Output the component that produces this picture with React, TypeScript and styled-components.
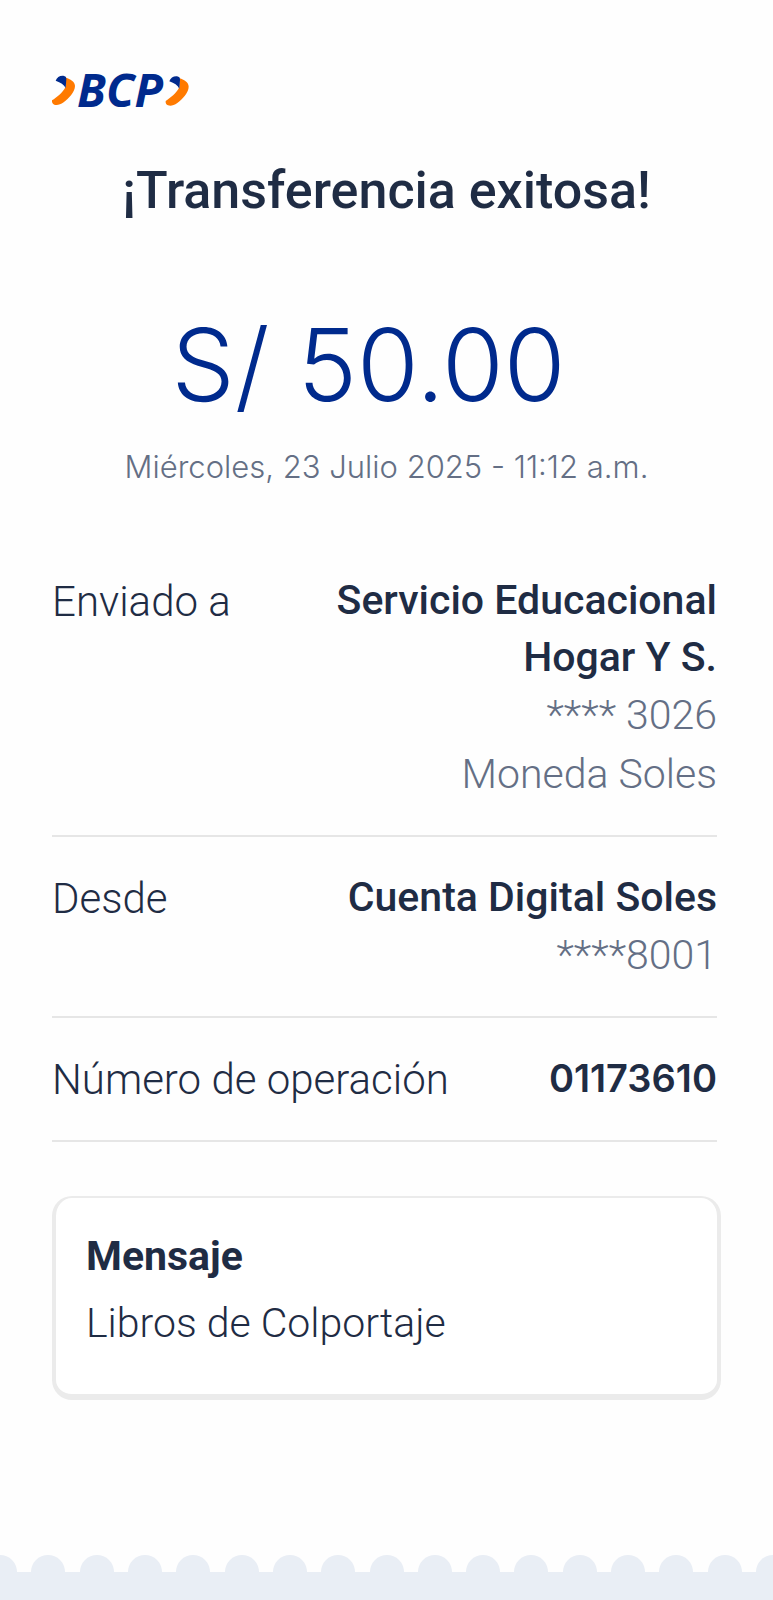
import React from 'react';
import styled, { createGlobalStyle } from 'styled-components';

const color = {
  ink: '#1f2c44',
  muted: '#646f85',
  brand: '#002a8d',
  orange: '#ff7a00',
  line: '#e6e6e6',
  cardEdge: '#ebebeb',
  footer: '#e9eef5',
};

const GlobalStyle = createGlobalStyle`
  *, *::before, *::after { box-sizing: border-box; }
  body {
    margin: 0;
    background: #fefefe;
    color: ${color.ink};
    font-family: Roboto, 'Liberation Sans', sans-serif;
  }
`;

const Page = styled.div`
  display: flex;
  flex-direction: column;
  min-height: 100vh;
  overflow: hidden;
`;

const Receipt = styled.main`
  display: flex;
  flex-direction: column;
  padding: 68px 52px 150px;
`;

const Logo = styled.svg`
  display: block;
  width: 137px;
  height: 56px;
  overflow: visible;
`;

const Header = styled.header`
  display: flex;
  flex-direction: column;
  text-align: center;
`;

const Title = styled.h1`
  margin: 37px 0 0;
  font-size: 52px;
  line-height: 60px;
  font-weight: 500;
`;

const Amount = styled.p`
  margin: 84px 0 0;
  padding-right: 36px;
  color: ${color.brand};
  font-family: Inter, Roboto, sans-serif;
  font-size: 100px;
  line-height: 120px;
  font-weight: 300;
`;

const Timestamp = styled.p`
  margin: 22px 0 0;
  color: ${color.muted};
  font-family: Inter, Roboto, sans-serif;
  font-size: 31px;
  line-height: 40px;
  font-weight: 300;
`;

const Details = styled.dl`
  margin: 53px 4px 0 0;
`;

const Row = styled.div`
  display: flex;
  justify-content: space-between;
  gap: 32px;
  padding: 32px 0 31px;
  border-bottom: 2px solid ${color.line};
`;

const Label = styled.dt`
  font-size: 42px;
  line-height: 59px;
  font-weight: 300;
  white-space: nowrap;
`;

const Values = styled.dd`
  display: flex;
  flex-direction: column;
  max-width: 400px;
  margin: 0;
  text-align: right;
`;

const Strong = styled.span<{ $numeric?: boolean }>`
  font-family: ${(p) => (p.$numeric ? 'Inter, Roboto, sans-serif' : 'inherit')};
  font-size: ${(p) => (p.$numeric ? 38 : 41)}px;
  line-height: 57px;
  font-weight: ${(p) => (p.$numeric ? 600 : 500)};
`;

const Light = styled.span<{ $muted?: boolean }>`
  color: ${(p) => (p.$muted ? color.muted : color.ink)};
  font-size: 41px;
  line-height: 59px;
  font-weight: 300;
`;

const MessageCard = styled.section`
  display: flex;
  flex-direction: column;
  gap: 9px;
  margin-top: 54px;
  padding: 30px 30px 41px;
  border: solid ${color.cardEdge};
  border-width: 2px 4px 6px;
  border-radius: 20px;
  background: #fff;
`;

const CardTitle = styled.h2`
  margin: 0;
  font-size: 41px;
  line-height: 57px;
  font-weight: 700;
`;

const Footer = styled.footer`
  margin-top: auto;
`;

const Scallops = styled.div`
  display: flex;
  justify-content: space-between;
  margin: 0 -17px;
`;

const Dome = styled.span`
  width: 34px;
  height: 17px;
  border-radius: 17px 17px 0 0;
  background: ${color.footer};
`;

const FooterBase = styled.div`
  height: 28px;
  background: ${color.footer};
`;

const Chevron = () => (
  <>
    <path
      fill={color.orange}
      d="M78 53 C90 57 105 64 105 78 C105 95 86 116 71 127 C60 135 50 137 43 134 C38 132 35 128 36 121 C50 112 68 98 77 80 Z"
    />
    <path
      fill={color.brand}
      d="M47 62 C50 52 60 46 70 47 C76 48 80 51 79 58 L77 84 C72 74 62 67 47 62 Z"
    />
  </>
);

const BcpLogo = () => (
  <Logo viewBox="36 24 411 168" role="img" aria-label="BCP">
    <Chevron />
    <text
      x="111"
      y="140"
      fill={color.brand}
      fontFamily="'Open Sans', 'Noto Sans', sans-serif"
      fontSize="140"
      fontStyle="italic"
      fontWeight="700"
    >
      BCP
    </text>
    <g transform="translate(341 2)">
      <Chevron />
    </g>
  </Logo>
);

type Detail = { label: string; name: string; numeric?: boolean; extra: string[] };

const details: Detail[] = [
  { label: 'Enviado a', name: 'Servicio Educacional Hogar Y S.', extra: ['**** 3026', 'Moneda Soles'] },
  { label: 'Desde', name: 'Cuenta Digital Soles', extra: ['****8001'] },
  { label: 'Número de operación', name: '01173610', numeric: true, extra: [] },
];

export default function App() {
  return (
    <Page>
      <GlobalStyle />
      <Receipt>
        <BcpLogo />
        <Header>
          <Title>¡Transferencia exitosa!</Title>
          <Amount>S/ 50.00</Amount>
          <Timestamp>Miércoles, 23 Julio 2025 - 11:12 a.m.</Timestamp>
        </Header>
        <Details>
          {details.map((d) => (
            <Row key={d.label}>
              <Label>{d.label}</Label>
              <Values>
                <Strong $numeric={d.numeric}>{d.name}</Strong>
                {d.extra.map((text) => (
                  <Light key={text} $muted>
                    {text}
                  </Light>
                ))}
              </Values>
            </Row>
          ))}
        </Details>
        <MessageCard>
          <CardTitle>Mensaje</CardTitle>
          <Light>Libros de Colportaje</Light>
        </MessageCard>
      </Receipt>
      <Footer>
        <Scallops aria-hidden="true">
          {Array.from({ length: 17 }, (_, i) => (
            <Dome key={i} />
          ))}
        </Scallops>
        <FooterBase />
      </Footer>
    </Page>
  );
}
